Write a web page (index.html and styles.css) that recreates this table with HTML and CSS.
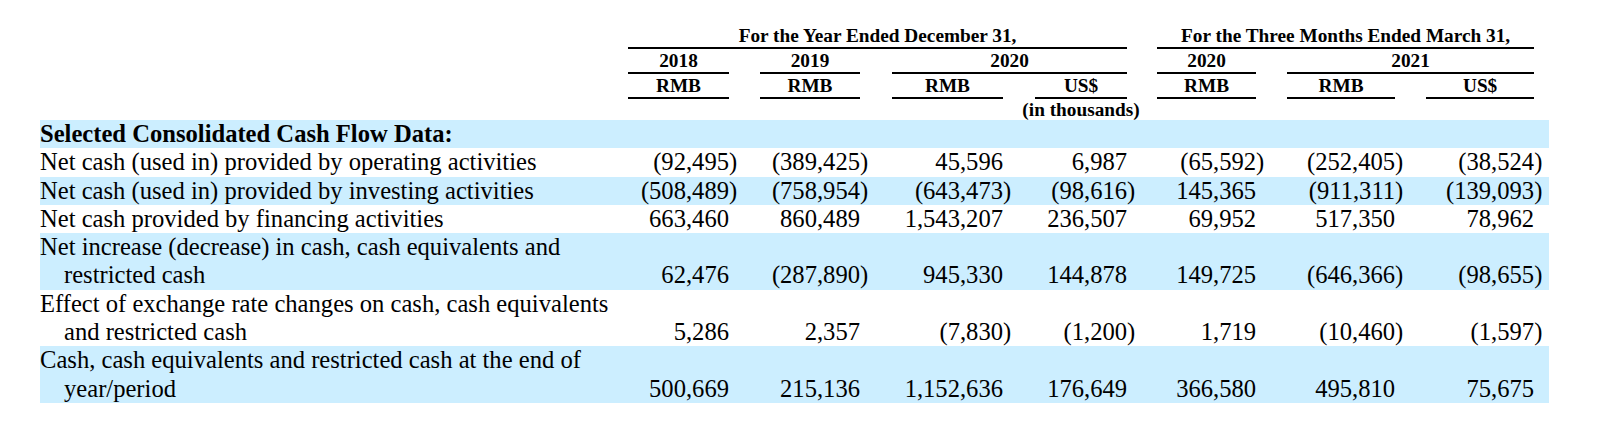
FILE: index.html
```html
<!DOCTYPE html>
<html>
<head>
<meta charset="utf-8">
<link rel="stylesheet" href="styles.css">
</head>
<body>
<table class="cf">
  <colgroup>
    <col class="c-label">
    <col class="w101"><col class="w8"><col class="w23">
    <col class="w100"><col class="w8"><col class="w24">
    <col class="w111"><col class="w8"><col class="w24">
    <col class="w92"><col class="w8"><col class="w22">
    <col class="w99"><col class="w8"><col class="w23">
    <col class="w108"><col class="w8"><col class="w23">
    <col class="w108"><col class="w15">
  </colgroup>
  <thead>
    <tr class="hd">
      <th></th>
      <th colspan="10" class="ul">For the Year Ended December 31,</th>
      <th colspan="2"></th>
      <th colspan="7" class="ul">For the Three Months Ended March 31,</th>
      <th></th>
    </tr>
    <tr class="hd">
      <th></th>
      <th class="ul">2018</th><th colspan="2"></th>
      <th class="ul">2019</th><th colspan="2"></th>
      <th colspan="4" class="ul">2020</th><th colspan="2"></th>
      <th class="ul">2020</th><th colspan="2"></th>
      <th colspan="4" class="ul">2021</th><th></th>
    </tr>
    <tr class="hd">
      <th></th>
      <th class="ul">RMB</th><th colspan="2"></th>
      <th class="ul">RMB</th><th colspan="2"></th>
      <th class="ul">RMB</th><th colspan="2"></th>
      <th class="ul">US$</th><th colspan="2"></th>
      <th class="ul">RMB</th><th colspan="2"></th>
      <th class="ul">RMB</th><th colspan="2"></th>
      <th class="ul">US$</th><th></th>
    </tr>
    <tr class="hd hd-note">
      <th></th>
      <th colspan="9"></th>
      <th><span class="note">(in thousands)</span></th>
      <th colspan="10"></th>
    </tr>
  </thead>
  <tbody>
    <tr class="shade">
      <td class="label strong">Selected Consolidated Cash Flow Data:</td>
      <td colspan="20"></td>
    </tr>
    <tr>
      <td class="label">Net cash (used in) provided by operating activities</td>
      <td class="num">(92,495</td><td class="par">)</td><td></td>
      <td class="num">(389,425</td><td class="par">)</td><td></td>
      <td class="num">45,596</td><td class="par"></td><td></td>
      <td class="num">6,987</td><td class="par"></td><td></td>
      <td class="num">(65,592</td><td class="par">)</td><td></td>
      <td class="num">(252,405</td><td class="par">)</td><td></td>
      <td class="num">(38,524</td><td class="par">)</td>
    </tr>
    <tr class="shade">
      <td class="label">Net cash (used in) provided by investing activities</td>
      <td class="num">(508,489</td><td class="par">)</td><td></td>
      <td class="num">(758,954</td><td class="par">)</td><td></td>
      <td class="num">(643,473</td><td class="par">)</td><td></td>
      <td class="num">(98,616</td><td class="par">)</td><td></td>
      <td class="num">145,365</td><td class="par"></td><td></td>
      <td class="num">(911,311</td><td class="par">)</td><td></td>
      <td class="num">(139,093</td><td class="par">)</td>
    </tr>
    <tr>
      <td class="label">Net cash provided by financing activities</td>
      <td class="num">663,460</td><td class="par"></td><td></td>
      <td class="num">860,489</td><td class="par"></td><td></td>
      <td class="num">1,543,207</td><td class="par"></td><td></td>
      <td class="num">236,507</td><td class="par"></td><td></td>
      <td class="num">69,952</td><td class="par"></td><td></td>
      <td class="num">517,350</td><td class="par"></td><td></td>
      <td class="num">78,962</td><td class="par"></td>
    </tr>
    <tr class="shade">
      <td class="label">Net increase (decrease) in cash, cash equivalents and restricted cash</td>
      <td class="num">62,476</td><td class="par"></td><td></td>
      <td class="num">(287,890</td><td class="par">)</td><td></td>
      <td class="num">945,330</td><td class="par"></td><td></td>
      <td class="num">144,878</td><td class="par"></td><td></td>
      <td class="num">149,725</td><td class="par"></td><td></td>
      <td class="num">(646,366</td><td class="par">)</td><td></td>
      <td class="num">(98,655</td><td class="par">)</td>
    </tr>
    <tr>
      <td class="label">Effect of exchange rate changes on cash, cash equivalents and restricted cash</td>
      <td class="num">5,286</td><td class="par"></td><td></td>
      <td class="num">2,357</td><td class="par"></td><td></td>
      <td class="num">(7,830</td><td class="par">)</td><td></td>
      <td class="num">(1,200</td><td class="par">)</td><td></td>
      <td class="num">1,719</td><td class="par"></td><td></td>
      <td class="num">(10,460</td><td class="par">)</td><td></td>
      <td class="num">(1,597</td><td class="par">)</td>
    </tr>
    <tr class="shade">
      <td class="label">Cash, cash equivalents and restricted cash at the end of year/period</td>
      <td class="num">500,669</td><td class="par"></td><td></td>
      <td class="num">215,136</td><td class="par"></td><td></td>
      <td class="num">1,152,636</td><td class="par"></td><td></td>
      <td class="num">176,649</td><td class="par"></td><td></td>
      <td class="num">366,580</td><td class="par"></td><td></td>
      <td class="num">495,810</td><td class="par"></td><td></td>
      <td class="num">75,675</td><td class="par"></td>
    </tr>
  </tbody>
</table>
</body>
</html>
```

FILE: styles.css
```css
html, body {
  margin: 0;
  padding: 0;
  background: #ffffff;
}

body {
  font-family: "Liberation Serif", "Times New Roman", serif;
  color: #000000;
}

.cf {
  table-layout: fixed;
  border-collapse: separate;
  border-spacing: 0;
  width: 1509px;
  margin: 24px 0 0 40px;
}

.c-label { width: 588px; }
.w8 { width: 8px; }
.w15 { width: 15px; }
.w22 { width: 22px; }
.w23 { width: 23px; }
.w24 { width: 24px; }
.w92 { width: 92px; }
.w99 { width: 99px; }
.w100 { width: 100px; }
.w101 { width: 101px; }
.w108 { width: 108px; }
.w111 { width: 111px; }

.hd th {
  padding: 0;
  font-size: 19.3px;
  font-weight: bold;
  line-height: 23px;
  height: 23px;
  text-align: center;
  white-space: nowrap;
  border-bottom: 2px solid transparent;
}

.hd th.ul {
  border-bottom-color: #000000;
}

.hd-note th {
  height: 21px;
  line-height: 21px;
  border-bottom: 0;
}

.note {
  display: block;
  margin: 0 -16px;
  text-align: center;
}

tbody td {
  padding: 0;
  font-size: 24.6px;
  line-height: 28.3px;
  vertical-align: bottom;
}

tbody tr.shade td {
  background: #cceeff;
}

.label {
  padding-left: 24px;
  text-indent: -24px;
  vertical-align: top;
}

tbody td.label {
  vertical-align: top;
}

.strong {
  font-weight: bold;
}

.num {
  text-align: right;
  white-space: nowrap;
}

.par {
  text-align: left;
  white-space: nowrap;
}
```
